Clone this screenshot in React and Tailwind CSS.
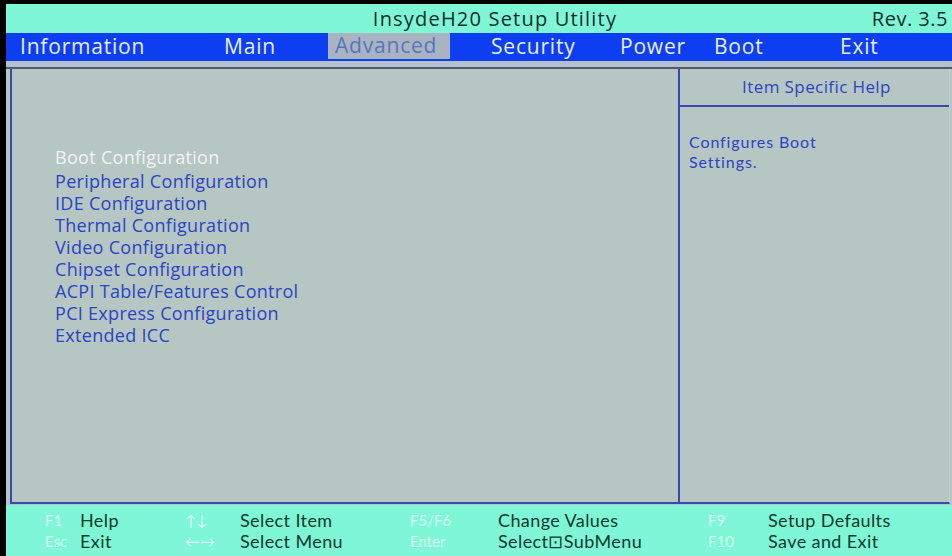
import React from 'react';

const menu = [
  { label: 'Information', w: 'w-[204px]' },
  { label: 'Main', w: 'w-[104px]' },
  { label: 'Advanced', w: 'w-[122px]', active: true },
  { label: '', w: 'w-[41px]' },
  { label: 'Security', w: 'w-[129px]' },
  { label: 'Power', w: 'w-[94px]' },
  { label: 'Boot', w: 'w-[126px]' },
  { label: 'Exit', w: 'w-[90px]' },
];

const items = [
  'Boot Configuration',
  'Peripheral Configuration',
  'IDE Configuration',
  'Thermal Configuration',
  'Video Configuration',
  'Chipset Configuration',
  'ACPI Table/Features Control',
  'PCI Express Configuration',
  'Extended ICC',
];

const keys = [
  { k1: 'F1', d1: 'Help', k2: 'Esc', d2: 'Exit', kw: 'w-[35px]', dw: 'w-[105px]' },
  { k1: '↑↓', d1: 'Select Item', k2: '←→', d2: 'Select Menu', kw: 'w-[55px]', dw: 'w-[170px]' },
  { k1: 'F5/F6', d1: 'Change Values', k2: 'Enter', d2: 'Select\u22A1SubMenu', kw: 'w-[88px]', dw: 'w-[210px]' },
  { k1: 'F9', d1: 'Setup Defaults', k2: 'F10', d2: 'Save and Exit', kw: 'w-[60px]', dw: 'w-[180px]' },
];

export default function App() {
  return (
    <div className="w-[952px] h-[556px] bg-black pl-[6px] pt-[4px] flex flex-col overflow-hidden font-['Open_Sans',sans-serif]">
      {/* Title */}
      <div className="h-[29px] bg-[#7ff6d5] relative flex items-center justify-center">
        <span className="text-[20px] tracking-[1.2px] text-[#0f2f2a] ml-[32px]">InsydeH20 Setup Utility</span>
        <span className="absolute right-[4px] text-[20px] tracking-[0.5px] text-[#0f2f2a]">Rev. 3.5</span>
      </div>

      {/* Menu bar */}
      <div className="h-[28px] bg-[#0d3ef2] flex items-stretch pl-[14px]">
        {menu.map((m, i) => (
          <div
            key={i}
            className={`${m.w} flex items-center text-[21px] tracking-[0.8px] ${
              m.active ? 'bg-[#a9b3c2] text-[#5876be] pl-[7px] mb-[2px]' : 'text-[#e6eeff]'
            }`}
          >
            {m.label}
          </div>
        ))}
      </div>

      {/* Body */}
      <div className="flex-1 bg-[#b6c0cb] pt-[6px] flex flex-col">
        <div className="flex-1 bg-[#b6c6c3] border-t-2 border-[#4e5a78] pl-[4px] pr-[2px] pb-[1px] flex flex-col">
          <div className="flex-1 flex border-l-2 border-b-2 border-r border-[#3a48b4] border-r-[#c4ccd6]">
            <div className="w-[668px] border-r-2 border-[#3a48b4] pl-[43px] pt-[77px]">
              {items.map((t, i) => (
                <div
                  key={t}
                  className={`text-[18px] leading-[22px] tracking-[0.3px] ${
                    i === 0 ? 'text-[#f2f4f4] mb-[2px]' : 'text-[#2a44c4]'
                  }`}
                >
                  {t}
                </div>
              ))}
            </div>
            <div className="flex-1 flex flex-col">
              <div className="h-[38px] border-b-2 border-[#3a48b4] flex items-center justify-center text-[17px] tracking-[0.4px] text-[#2a44c4] pl-[4px]">
                Item Specific Help
              </div>
              <div className="pl-[9px] pt-[25px] font-['Lato',sans-serif] text-[16px] leading-[20px] tracking-[0.9px] text-[#2a44c4]">
                <div>Configures Boot</div>
                <div>Settings.</div>
              </div>
            </div>
          </div>
        </div>
      </div>

      {/* Footer */}
      <div className="h-[51px] bg-[#7ff6d5] flex pl-[39px] pt-[5px] font-['Lato',sans-serif] text-[18px] leading-[21px]">
        {keys.map((c, i) => (
          <div key={i} className="flex">
            <div className={`${c.kw} text-[#d6fff2] text-[15px]`}>
              <div>{c.k1}</div>
              <div>{c.k2}</div>
            </div>
            <div className={`${c.dw} text-[#0e3a2c] tracking-[0.4px]`}>
              <div>{c.d1}</div>
              <div>{c.d2}</div>
            </div>
          </div>
        ))}
      </div>
    </div>
  );
}
